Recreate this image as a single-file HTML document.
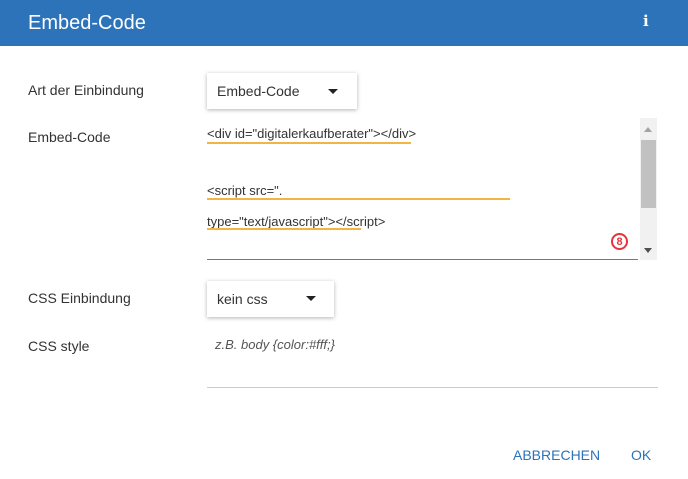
<!DOCTYPE html>
<html><head><style>
body{margin:0;width:688px;height:479px;background:#fff;font-family:"Liberation Sans",sans-serif;position:relative;overflow:hidden;color:#333}
.a{position:absolute}
.hdr{left:0;top:0;width:688px;height:46px;background:#2c73b9}
.t{font-size:14px;color:#333}
.sel{background:#fff;box-shadow:0 1px 4px rgba(0,0,0,.3);font-size:14px}
.tri{width:0;height:0;border-left:5px solid transparent;border-right:5px solid transparent;border-top:5px solid #222}
.ul{height:2px;background:#f2b544}
</style></head><body>
<div class="a hdr"></div>
<div class="a" style="left:28px;top:12px;font-size:20px;color:#fff">Embed-Code</div>
<div class="a" style="left:643px;top:12px;color:#fff;font:bold 15px 'DejaVu Serif',serif">i</div>
<div class="a t" style="left:28px;top:82px">Art der Einbindung</div>
<div class="a sel" style="left:207px;top:73px;width:150px;height:36px"><span class="a" style="left:10px;top:10px">Embed-Code</span><div class="a tri" style="left:121px;top:16px"></div></div>
<div class="a t" style="left:28px;top:129px">Embed-Code</div>
<div class="a t" style="left:207px;top:126px;font-size:13px">&lt;div id="digitalerkaufberater"&gt;&lt;/div&gt;</div>
<div class="a ul" style="left:207px;top:142px;width:204px"></div>
<div class="a t" style="left:207px;top:183px;font-size:13px">&lt;script src=".</div>
<div class="a ul" style="left:207px;top:198px;width:303px"></div>
<div class="a t" style="left:207px;top:214px;font-size:13px">type="text/javascript"&gt;&lt;/script&gt;</div>
<div class="a ul" style="left:207px;top:228px;width:154px"></div>
<div class="a" style="left:611px;top:233px;width:17px;height:17px;border:2px solid #e8333c;border-radius:50%;box-sizing:border-box;color:#e8333c;font:bold 11px 'Liberation Sans';text-align:center;line-height:14px">8</div>
<div class="a" style="left:207px;top:259px;width:431px;height:1px;background:#3a86d0"></div>
<div class="a" style="left:640px;top:118px;width:17px;height:142px;background:#f1f1f1"></div>
<div class="a" style="left:641px;top:140px;width:15px;height:68px;background:#c1c1c1"></div>
<div class="a" style="left:644px;top:127px;width:0;height:0;border-left:4px solid transparent;border-right:4px solid transparent;border-bottom:5px solid #a3a3a3"></div>
<div class="a" style="left:644px;top:248px;width:0;height:0;border-left:4px solid transparent;border-right:4px solid transparent;border-top:5px solid #505050"></div>
<div class="a t" style="left:28px;top:290px">CSS Einbindung</div>
<div class="a sel" style="left:207px;top:281px;width:127px;height:36px"><span class="a" style="left:10px;top:10px">kein css</span><div class="a tri" style="left:99px;top:15px"></div></div>
<div class="a t" style="left:28px;top:338px">CSS style</div>
<div class="a" style="left:215px;top:337px;font-size:13px;font-style:italic;color:#555">z.B. body {color:#fff;}</div>
<div class="a" style="left:207px;top:387px;width:451px;height:1px;background:#ccc"></div>
<div class="a" style="left:513px;top:447px;font-size:14px;color:#2c73b9">ABBRECHEN</div>
<div class="a" style="left:631px;top:447px;font-size:14px;color:#2c73b9">OK</div>
</body></html>
